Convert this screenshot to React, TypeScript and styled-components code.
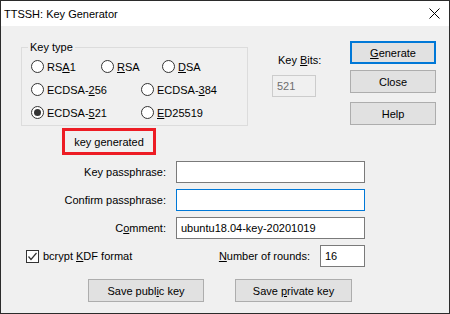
import React from "react";
import styled, {createGlobalStyle} from "styled-components";

const GlobalStyle = createGlobalStyle`
  html, body {
    margin: 0;
    padding: 0;
    background: #ffffff;
  }
  body {
    font-family: "Liberation Sans", Arial, sans-serif;
    font-size: 11px;
    color: #000000;
  }
`;

const Window = styled.div`
  width: 450px;
  height: 314px;
  box-sizing: border-box;
  border: 1px solid #2b2b2b;
  background: #f0f0f0;
  display: flex;
  flex-direction: column;
`;

const TitleBar = styled.div`
  height: 25px;
  flex: 0 0 25px;
  background: #ffffff;
  display: flex;
  align-items: center;
  justify-content: space-between;
  padding: 0 9px 0 3px;
  font-size: 11px;
  line-height: 14px;
`;

const Body = styled.div`
  display: flex;
  flex-direction: column;
  padding: 14px 0 0 20px;
`;

const TopSection = styled.div`
  display: flex;
  align-items: flex-start;
`;

const GroupBox = styled.fieldset`
  box-sizing: border-box;
  width: 227px;
  height: 86px;
  margin: 0;
  padding: 1px 0 0 6px;
  border: 1px solid #dcdcdc;
  min-width: 0;
`;

const Legend = styled.legend`
  padding: 0 2px;
  line-height: 14px;
`;

const RadioRow = styled.div<{ $cols: string }>`
  display: grid;
  grid-template-columns: ${p => p.$cols};
  height: 23px;
  align-items: center;
  margin-left: 3px;
`;

const RadioItem = styled.label`
  display: flex;
  align-items: center;
  gap: 3px;
  line-height: 14px;
  white-space: nowrap;
`;

const RadioCircle = styled.span<{ $checked?: boolean }>`
  box-sizing: border-box;
  width: 13px;
  height: 13px;
  border: 1px solid #333333;
  border-radius: 50%;
  background: #ffffff;
  display: flex;
  align-items: center;
  justify-content: center;

  &::after {
    content: "";
    display: ${p => (p.$checked ? "block" : "none")};
    width: 7px;
    height: 7px;
    border-radius: 50%;
    background: #333333;
  }
`;

const KeyBitsColumn = styled.div`
  display: flex;
  flex-direction: column;
  width: 44px;
  margin-left: 24px;
  padding-top: 13px;
`;

const KeyBitsLabel = styled.span`
  line-height: 14px;
  margin-left: 6px;
  white-space: nowrap;
`;

const TextField = styled.div<{ $width: number; $focused?: boolean; $disabled?: boolean }>`
  box-sizing: border-box;
  width: ${p => p.$width}px;
  height: 22px;
  border: 1px solid ${p => (p.$disabled ? "#cccccc" : p.$focused ? "#0078d7" : "#7a7a7a")};
  background: ${p => (p.$disabled ? "#f0f0f0" : "#ffffff")};
  color: ${p => (p.$disabled ? "#6d6d6d" : "#000000")};
  display: flex;
  align-items: center;
  padding-left: 4px;
  line-height: 14px;
`;

const KeyBitsField = styled(TextField)`
  margin-top: 8px;
`;

const ButtonColumn = styled.div`
  display: flex;
  flex-direction: column;
  margin-left: 34px;
  margin-top: 1px;
  gap: 6px;

  > :last-child {
    margin-top: 3px;
  }
`;

const Button = styled.button<{ $width: number; $default?: boolean }>`
  box-sizing: border-box;
  width: ${p => p.$width}px;
  height: 23px;
  margin: 0;
  padding: 0;
  background: #e1e1e1;
  border: ${p => (p.$default ? "2px solid #0078d7" : "1px solid #adadad")};
  font-family: "Liberation Sans", Arial, sans-serif;
  font-size: 11px;
  color: #000000;
  line-height: 14px;
`;

const StatusLabel = styled.div`
  box-sizing: border-box;
  width: 94px;
  height: 27px;
  margin: 2px 0 0 41px;
  border: 3px solid #ed1c24;
  display: flex;
  align-items: center;
  justify-content: center;
  line-height: 14px;
`;

const Form = styled.div`
  display: grid;
  grid-template-columns: 145px 189px;
  column-gap: 10px;
  row-gap: 6px;
  margin-top: 6px;
  align-items: center;
`;

const FieldLabel = styled.span`
  text-align: right;
  line-height: 14px;
`;

const OptionsRow = styled.div`
  display: flex;
  align-items: center;
  justify-content: space-between;
  width: 344px;
  box-sizing: border-box;
  padding-left: 5px;
  margin-top: 6px;
`;

const CheckItem = styled.label`
  display: flex;
  align-items: center;
  gap: 4px;
  line-height: 14px;
`;

const CheckBox = styled.span`
  box-sizing: border-box;
  width: 13px;
  height: 13px;
  border: 1px solid #333333;
  background: #ffffff;
  display: flex;
  align-items: center;
  justify-content: center;
`;

const RoundsGroup = styled.div`
  display: flex;
  align-items: center;
  gap: 10px;
`;

const BottomRow = styled.div`
  display: flex;
  gap: 31px;
  margin: 12px 0 0 67px;
`;

const U = styled.span`
  text-decoration: underline;
`;

const CloseIcon = () => (
  <svg width="11" height="11" viewBox="0 0 11 11">
    <path d="M0.5 0.5 L10.5 10.5 M10.5 0.5 L0.5 10.5" stroke="#000" strokeWidth="1" fill="none"/>
  </svg>
);

const CheckMark = () => (
  <svg width="11" height="11" viewBox="0 0 11 11">
    <path d="M1.5 5.5 L4 8.5 L9.5 2" stroke="#333" strokeWidth="1.2" fill="none"/>
  </svg>
);

const Radio = ({checked, children}: { checked?: boolean; children: React.ReactNode }) => (
  <RadioItem>
    <RadioCircle $checked={checked}/>
    <span>{children}</span>
  </RadioItem>
);

export default function App() {
  return (
    <>
      <GlobalStyle/>
      <Window>
        <TitleBar>
          <span>TTSSH: Key Generator</span>
          <CloseIcon/>
        </TitleBar>
        <Body>
          <TopSection>
            <GroupBox>
              <Legend>Key type</Legend>
              <RadioRow $cols="70px 61px auto">
                <Radio>RS<U>A</U>1</Radio>
                <Radio><U>R</U>SA</Radio>
                <Radio><U>D</U>SA</Radio>
              </RadioRow>
              <RadioRow $cols="110px auto">
                <Radio>ECDSA-<U>2</U>56</Radio>
                <Radio>ECDSA-<U>3</U>84</Radio>
              </RadioRow>
              <RadioRow $cols="110px auto">
                <Radio checked>ECDSA-<U>5</U>21</Radio>
                <Radio><U>E</U>D25519</Radio>
              </RadioRow>
            </GroupBox>
            <KeyBitsColumn>
              <KeyBitsLabel>Key <U>B</U>its:</KeyBitsLabel>
              <KeyBitsField $width={44} $disabled>521</KeyBitsField>
            </KeyBitsColumn>
            <ButtonColumn>
              <Button $width={86} $default><U>G</U>enerate</Button>
              <Button $width={86}>Close</Button>
              <Button $width={86}>Help</Button>
            </ButtonColumn>
          </TopSection>
          <StatusLabel>key generated</StatusLabel>
          <Form>
            <FieldLabel>Key passphrase:</FieldLabel>
            <TextField $width={189}/>
            <FieldLabel>Confirm passphrase:</FieldLabel>
            <TextField $width={189} $focused/>
            <FieldLabel>C<U>o</U>mment:</FieldLabel>
            <TextField $width={189}>ubuntu18.04-key-20201019</TextField>
          </Form>
          <OptionsRow>
            <CheckItem>
              <CheckBox><CheckMark/></CheckBox>
              <span>bcrypt <U>K</U>DF format</span>
            </CheckItem>
            <RoundsGroup>
              <span><U>N</U>umber of rounds:</span>
              <TextField $width={45}>16</TextField>
            </RoundsGroup>
          </OptionsRow>
          <BottomRow>
            <Button $width={116}>Save publ<U>i</U>c key</Button>
            <Button $width={117}>Save <U>p</U>rivate key</Button>
          </BottomRow>
        </Body>
      </Window>
    </>
  );
}
